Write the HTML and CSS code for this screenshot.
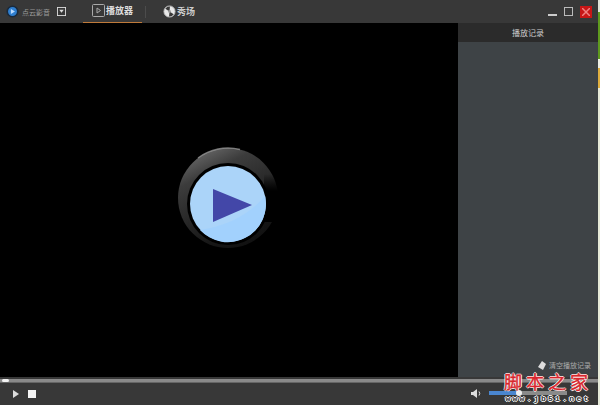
FILE: index.html
```html
<!DOCTYPE html>
<html lang="zh-CN">
<head>
  <meta charset="UTF-8" />
  <title>点云影音</title>
  <link rel="stylesheet" href="styles.css">
</head>
<body>
  <div class="window">
    <header class="titlebar">
      <div class="brand">
        <svg class="brand-icon" width="13" height="13" viewBox="0 0 16 16">
          <circle cx="8" cy="8" r="6.500" fill="#2f7fd0" stroke="#1a2a3c" stroke-width="2" />
          <path d="M6 5v6l5-3z" fill="#bcdcff" />
        </svg>
        <span class="brand-name">点云影音</span>
        <svg class="brand-menu" width="9" height="9" viewBox="0 0 10 10">
          <rect x="0.5" y="0.5" width="9" height="9" fill="none" stroke="#ddd" />
          <path d="M2.500 3h5L5 6.500z" fill="#ddd" />
        </svg>
      </div>

      <nav class="tabs">
        <div class="tab tab-active">
          <svg width="13" height="13" viewBox="0 0 13 13">
            <rect x="0.5" y="0.5" width="12" height="12" rx="1" fill="none" stroke="#aaa" />
            <path d="M5 4v5l3.500-2.500z" fill="none" stroke="#aaa" />
          </svg>
          <span>播放器</span>
        </div>
        <div class="tab-sep"></div>
        <div class="tab">
          <svg width="13" height="13" viewBox="0 0 14 14">
            <circle cx="7" cy="7" r="6" fill="#e8e8e8" stroke="#bbb" />
            <path d="M7 7L2.500 4A5.500 5.500 0 0 1 7.500 1.500zM7 7l4.500 3A5.500 5.500 0 0 1 6.500 12.500z" fill="#3a3a3a" />
            <circle cx="7" cy="7" r="1.500" fill="#999" />
          </svg>
          <span>秀场</span>
        </div>
      </nav>

      <div class="win-buttons">
        <span class="win-min"></span>
        <span class="win-max"></span>
        <span class="win-close">
          <svg width="8" height="8" viewBox="0 0 8 8">
            <path d="M0 0l8 8M8 0l-8 8" stroke="#f08080" stroke-width="1.500" />
          </svg>
        </span>
      </div>
    </header>

    <div class="content">
      <main class="video">
        <svg class="big-play" width="120" height="120" viewBox="0 0 120 120">
          <defs>
            <linearGradient id="ringFill" x1="0.25" y1="0" x2="0.75" y2="1">
              <stop offset="0" stop-color="#6a6a6a" />
              <stop offset="0.22" stop-color="#3c3c3c" />
              <stop offset="0.55" stop-color="#262626" />
              <stop offset="0.8" stop-color="#161616" />
              <stop offset="1" stop-color="#101010" />
            </linearGradient>
            <linearGradient id="fadeCut" x1="0" y1="0" x2="0" y2="1">
              <stop offset="0" stop-color="#000" stop-opacity="0" />
              <stop offset="0.35" stop-color="#000" />
              <stop offset="1" stop-color="#000" />
            </linearGradient>
          </defs>
          <circle cx="60" cy="54" r="50" fill="url(#ringFill)" />
          <path d="M30 14A50 50 0 0 1 72 5.500" fill="none" stroke="#a0a0a0" stroke-width="1.500" opacity="0.7" />
          <rect x="96" y="30" width="16" height="48" fill="url(#fadeCut)" />
          <circle cx="60" cy="60" r="41" fill="#000" />
          <circle cx="60" cy="60" r="38" fill="#abd4f9" />
          <path d="M97 52A38 38 0 0 1 32 86C60 82 82 70 97 52z" fill="#a2d1fd" />
          <path d="M45 45v33l39-17z" fill="#4347a8" />
        </svg>
      </main>
      <aside class="history">
        <div class="history-title">播放记录</div>
        <div class="history-list"></div>
        <div class="history-clear">
          <svg width="8" height="9" viewBox="0 0 8 9">
            <path d="M4 0l4 3-3 6-5-3z" fill="#ddd" />
          </svg>
          <span>清空播放记录</span>
        </div>
      </aside>
    </div>

    <div class="progress"><span class="progress-thumb"></span></div>

    <footer class="controls">
      <div class="transport">
        <svg width="6" height="8" viewBox="0 0 6 8"><path d="M0 0v8l6-4z" fill="#ddd" /></svg>
        <span class="stop"></span>
      </div>
      <div class="volume">
        <svg width="11" height="9" viewBox="0 0 11 9">
          <path d="M0 3h2l4-3v9L2 6H0z" fill="#ddd" />
          <path d="M8 2.500q1.500 2 0 4" fill="none" stroke="#ddd" />
        </svg>
        <div class="volume-track">
          <span class="volume-fill"></span>
          <span class="volume-thumb"></span>
        </div>
      </div>
    </footer>

    <div class="watermark">
      <div class="wm-title">脚本之家</div>
      <div class="wm-url">www.jb51.net</div>
    </div>
  </div>

  <div class="edge">
    <span class="edge-light-a"></span>
    <span class="edge-green"></span>
    <span class="edge-light-b"></span>
    <span class="edge-amber"></span>
    <span class="edge-light-c"></span>
  </div>
</body>
</html>
```

FILE: styles.css
```css
* {
  box-sizing: border-box;
}

body {
  margin: 0;
  width: 600px;
  height: 405px;
  display: flex;
  overflow: hidden;
  background: #fff;
  font-family: "Noto Sans CJK SC", "Liberation Sans", sans-serif;
}

.window {
  position: relative;
  width: 598px;
  height: 405px;
  display: flex;
  flex-direction: column;
  background: #383838;
}

.titlebar {
  height: 23px;
  display: flex;
  align-items: center;
  background: #383838;
}

.brand {
  width: 83px;
  display: flex;
  align-items: center;
  padding-left: 6px;
}

.brand-name {
  margin-left: 3px;
  font-size: 7px;
  white-space: nowrap;
  color: #9a9a9a;
}

.brand-menu {
  margin-left: 7px;
}

.tabs {
  display: flex;
  align-items: center;
  height: 23px;
  flex: 1;
}

.tab {
  height: 23px;
  display: flex;
  align-items: center;
  gap: 1px;
  padding: 0 8px 1px;
  font-size: 9px;
  font-weight: 700;
  white-space: nowrap;
  color: #ccc;
}

.tab-active {
  width: 59px;
  padding-left: 9px;
  border-bottom: 1px solid #c07a3a;
  color: #ddd;
}

.tab-sep {
  width: 1px;
  height: 12px;
  margin: 0 9px 0 3px;
  background: #4c4c4c;
}

.win-buttons {
  display: flex;
  align-items: center;
  gap: 7px;
  padding-right: 6px;
}

.win-min {
  width: 9px;
  height: 2px;
  margin-top: 7px;
  background: #ccc;
}

.win-max {
  width: 9px;
  height: 9px;
  border: 1px solid #bbb;
}

.win-close {
  width: 12px;
  height: 12px;
  display: flex;
  align-items: center;
  justify-content: center;
  background: #c81616;
}

.content {
  height: 354px;
  display: flex;
}

.video {
  width: 458px;
  display: flex;
  align-items: center;
  justify-content: center;
  background: #000;
}

.big-play {
  margin: 8px 2px 0 0;
}

.history {
  flex: 1;
  display: flex;
  flex-direction: column;
  background: #3e4346;
}

.history-title {
  height: 19px;
  line-height: 19px;
  text-align: center;
  font-size: 8px;
  color: #ccc;
  background: #2b2b2b;
}

.history-list {
  flex: 1;
}

.history-clear {
  height: 16px;
  display: flex;
  align-items: flex-start;
  justify-content: flex-end;
  gap: 3px;
  padding-right: 7px;
  font-size: 7px;
  line-height: 9px;
  color: #aaa;
}

.progress {
  position: relative;
  height: 4px;
  margin-top: 2px;
  background: #8a8a8a;
  border-bottom: 1px solid #666;
}

.progress-thumb {
  position: absolute;
  left: 2px;
  top: 0;
  width: 7px;
  height: 3px;
  border-radius: 2px;
  background: #f4f4f4;
}

.controls {
  flex: 1;
  display: flex;
  align-items: center;
  justify-content: space-between;
  background: #383838;
}

.transport {
  display: flex;
  align-items: center;
  gap: 9px;
  padding-left: 13px;
}

.stop {
  width: 8px;
  height: 8px;
  background: #f4f4f4;
}

.volume {
  display: flex;
  align-items: center;
  gap: 7px;
  margin-bottom: 2px;
}

.volume-track {
  position: relative;
  width: 78px;
  height: 4px;
  margin-right: 31px;
  background: #8a8a8a;
}

.volume-fill {
  display: block;
  width: 30px;
  height: 4px;
  background: #4a86d0;
}

.volume-thumb {
  position: absolute;
  left: 27px;
  top: -1px;
  width: 6px;
  height: 6px;
  border-radius: 50%;
  background: #eee;
}

.watermark {
  position: absolute;
  right: 6px;
  bottom: 1px;
  width: 88px;
  text-align: center;
}

.wm-title {
  margin-bottom: 3px;
  font-family: "Noto Sans CJK SC", "Liberation Serif", serif;
  font-size: 18px;
  line-height: 18px;
  letter-spacing: 4px;
  white-space: nowrap;
  color: #d8252c;
  -webkit-text-stroke: 0.4px #d8252c;
  text-shadow: 1px 0 #fff, -1px 0 #fff, 0 1px #fff, 0 -1px #fff;
}

.wm-url {
  font-family: "Liberation Mono", monospace;
  font-size: 8px;
  font-weight: 700;
  line-height: 11px;
  letter-spacing: 2.300px;
  white-space: nowrap;
  color: #333;
  text-shadow: 1px 0 #fff, -1px 0 #fff, 0 1px #fff, 0 -1px #fff;
}

.edge {
  width: 2px;
  height: 405px;
  display: flex;
  flex-direction: column;
}

.edge-light-a {
  height: 12px;
  background: #dfe3d8;
}

.edge-green {
  height: 47px;
  background: #5f9a1e;
}

.edge-light-b {
  height: 9px;
  background: #eef0e6;
}

.edge-amber {
  height: 20px;
  background: #e0b040;
}

.edge-light-c {
  flex: 1;
  background: #e6ead8;
}
```
